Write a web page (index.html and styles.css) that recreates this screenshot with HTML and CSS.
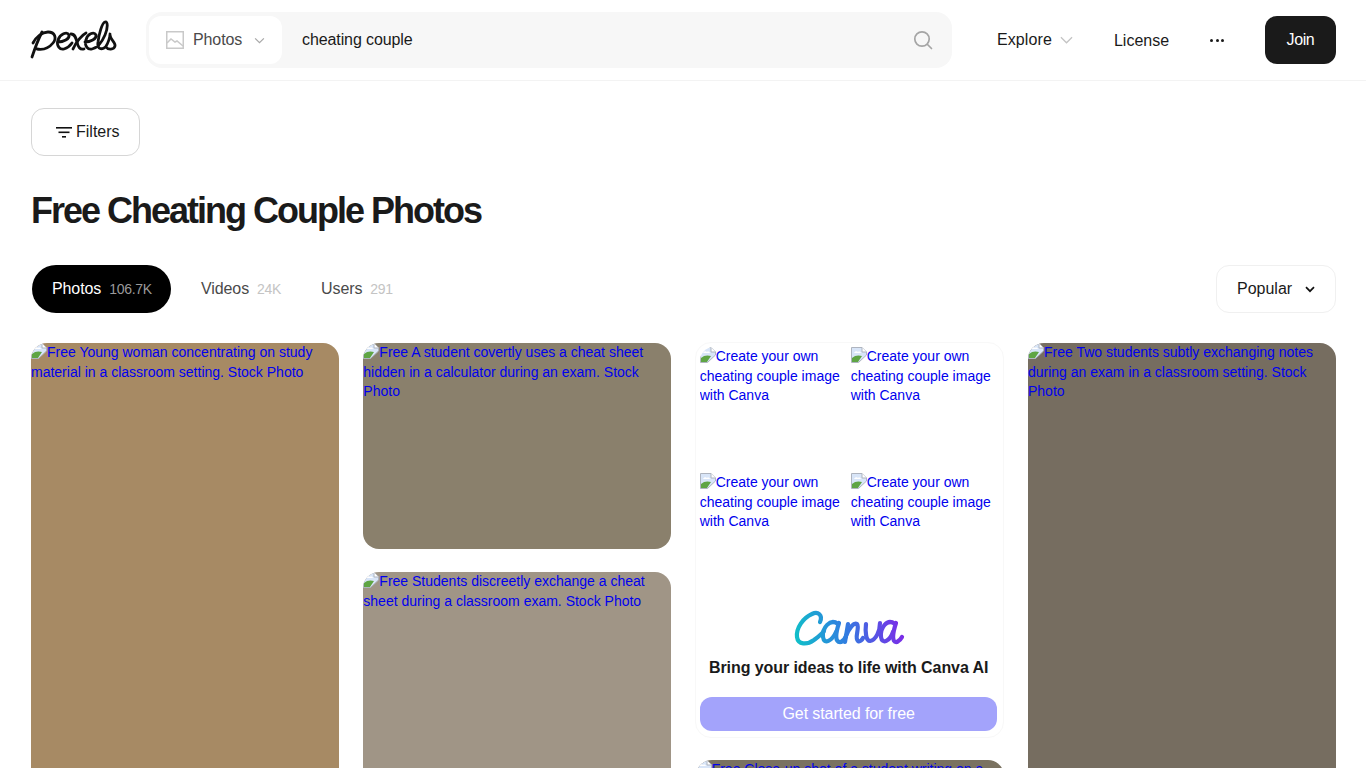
FILE: index.html
```html
<!DOCTYPE html>
<html lang="en">

<head>
	<meta charset="UTF-8">
	<meta name="viewport" content="width=device-width, initial-scale=1.0">
	<title>Free Cheating Couple Photos</title>
	<link rel="stylesheet" href="styles.css">
</head>

<body>
	<svg class="defs" width="0" height="0">
		<defs>
			<symbol id="broken" viewBox="0 0 16 16">
				<path d="M0.500 0.500h10.500l4.500 4.500v3l-8 7.500H0.500z" fill="#d8e5f8" stroke="#aeb4bf" stroke-width="1" />
				<path d="M11 0.500v4.500h4.500" fill="#fff" stroke="#aeb4bf" stroke-width="1" />
				<path d="M3 6c1-2 3-2 4-1 1-1 3 0 3 1z" fill="#fff" />
				<path d="M1 15v-4c3-3 7-3 10-2l-4 6z" fill="#5fa544" />
			</symbol>
			<linearGradient id="canva-grad" gradientUnits="userSpaceOnUse" x1="795" y1="640" x2="902" y2="620">
				<stop offset="0" stop-color="#10c0c8" />
				<stop offset="0.45" stop-color="#2f7fe0" />
				<stop offset="1" stop-color="#7d2ae8" />
			</linearGradient>
		</defs>
	</svg>

	<header class="topbar">
		<svg class="logo" viewBox="28 18 90 44" width="90" height="44" fill="none" stroke="#111" stroke-width="2.800" stroke-linecap="round" stroke-linejoin="round">
			<path d="M32 57C35 48 39 38 42 32" />
			<path d="M33 43C36 37 42 32 48 32C55 32 57 38 53 43C49 48 43 50 37 49" />
			<path d="M58 42C63 42 70 39 69 35C67 31 60 34 58 40C56 46 60 50 64 49C67 48 70 46 72 43" />
			<path d="M71 34C75 34 76 38 77 42C78 47 80 50 84 49" />
			<path d="M86 33C82 35 76 42 73 49" />
			<path d="M85 42C90 42 97 39 96 35C94 31 87 34 86 40C84 46 88 50 92 49C97 48 102 42 105 35C108 28 108 21 105 22C102 23 99 34 98 42C97 48 100 50 104 48C106 47 108 44 110 36" />
			<path d="M110 34C109 39 116 42 115 46C114 50 108 50 106 47" />
		</svg>

		<div class="search">
			<button class="search-type">
				<svg class="type-icon" viewBox="0 0 18 18" width="18" height="18" fill="none" stroke="#c9c9c9" stroke-width="1.500">
					<rect x="0.750" y="0.750" width="16.500" height="16.500" />
					<path d="M1 12l4-4 4 3 2-1 6 5" />
				</svg>
				<span>Photos</span>
				<svg class="chev" viewBox="0 0 12 8" width="11" height="7" fill="none" stroke="#a8a8a8" stroke-width="1.400"><path d="M1 1.500l5 5 5-5" /></svg>
			</button>
			<span class="search-text">cheating couple</span>
			<svg class="search-icon" viewBox="0 0 20 20" width="20" height="20" fill="none" stroke="#a5a5a5" stroke-width="1.700" stroke-linecap="round">
				<circle cx="9" cy="9" r="7.200" />
				<path d="M14.500 14.500l4 4" />
			</svg>
		</div>

		<nav class="nav">
			<span class="nav-explore">Explore
				<svg viewBox="0 0 14 8" width="13" height="8" fill="none" stroke="#c4c4c4" stroke-width="1.400"><path d="M1 1l6 6 6-6" /></svg>
			</span>
			<span class="nav-license">License</span>
			<span class="nav-dots"><i></i><i></i><i></i></span>
			<button class="join">Join</button>
		</nav>
	</header>

	<main class="page">
		<button class="filters">
			<svg viewBox="0 0 16 11" width="16" height="11" fill="#111">
				<rect x="0" y="0" width="16" height="1.600" />
				<rect x="2.500" y="4.500" width="11" height="1.600" />
				<rect x="6" y="9" width="4" height="1.600" />
			</svg>
			Filters
		</button>

		<h1>Free Cheating Couple Photos</h1>

		<div class="tabs-row">
			<div class="tabs">
				<span class="tab active">Photos <small>106.7K</small></span>
				<span class="tab">Videos <small>24K</small></span>
				<span class="tab">Users <small>291</small></span>
			</div>
			<button class="sort">Popular
				<svg viewBox="0 0 10 7" width="10" height="7" fill="none" stroke="#111" stroke-width="1.700"><path d="M1 1.200l4 4 4-4" /></svg>
			</button>
		</div>

		<div class="grid">
			<div class="col">
				<a class="photo tall tan"><svg class="bi"><use href="#broken" /></svg>Free Young woman concentrating on study material in a classroom setting. Stock Photo</a>
			</div>

			<div class="col">
				<a class="photo short olive"><svg class="bi"><use href="#broken" /></svg>Free A student covertly uses a cheat sheet hidden in a calculator during an exam. Stock Photo</a>
				<a class="photo tall stone"><svg class="bi"><use href="#broken" /></svg>Free Students discreetly exchange a cheat sheet during a classroom exam. Stock Photo</a>
			</div>

			<div class="col col-canva">
				<div class="canva">
					<div class="canva-grid">
						<a class="canva-cell"><svg class="bi"><use href="#broken" /></svg>Create your own cheating couple image with Canva</a>
						<a class="canva-cell"><svg class="bi"><use href="#broken" /></svg>Create your own cheating couple image with Canva</a>
						<a class="canva-cell"><svg class="bi"><use href="#broken" /></svg>Create your own cheating couple image with Canva</a>
						<a class="canva-cell"><svg class="bi"><use href="#broken" /></svg>Create your own cheating couple image with Canva</a>
					</div>
					<svg class="canva-logo" viewBox="793 608 112 42" width="112" height="42" fill="none" stroke="url(#canva-grad)" stroke-width="4.200" stroke-linecap="round" stroke-linejoin="round">
						<path d="M820 622C823 615 818 611 812 614C803 618 796 628 797 637C798 645 807 645 814 640C818 637 821 635 824 631" />
						<path d="M838 624C830 618 822 628 823 637C824 645 832 641 836 632" />
						<path d="M839 623C836 632 834 643 841 642C843 641 845 639 846 636" />
						<path d="M848 624L845 642" />
						<path d="M846 636C849 628 854 622 857 624C860 628 854 638 858 641C860 642 862 640 863 638" />
						<path d="M866 624C865 632 866 641 870 641C876 640 880 631 880 623" />
						<path d="M895 624C887 618 880 628 881 637C882 645 890 641 893 632" />
						<path d="M896 623C893 632 891 643 897 642C899 641 901 639 902 637" />
					</svg>
					<p class="canva-title">Bring your ideas to life with Canva AI</p>
					<button class="canva-cta">Get started for free</button>
				</div>
				<a class="photo tall umber"><svg class="bi"><use href="#broken" /></svg>Free Close-up shot of a student writing on a paper during an exam. Stock Photo</a>
			</div>

			<div class="col">
				<a class="photo tall taupe"><svg class="bi"><use href="#broken" /></svg>Free Two students subtly exchanging notes during an exam in a classroom setting. Stock Photo</a>
			</div>
		</div>
	</main>
</body>

</html>
```

FILE: styles.css
```css
* {
	box-sizing: border-box;
}

html,
body {
	height: 768px;
	overflow: hidden;
}

body {
	margin: 0;
	background: #fff;
	color: #1a1a1a;
	font-family: "Liberation Sans", Arial, sans-serif;
	font-size: 16px;
}

button {
	font: inherit;
	color: inherit;
	background: none;
	border: none;
	padding: 0;
}

.defs {
	position: absolute;
}

.topbar {
	display: flex;
	align-items: center;
	height: 81px;
	padding: 0 30px 0 28px;
	border-bottom: 1px solid #f3f3f3;
}

.logo {
	flex: none;
	margin-right: 28px;
}

.search {
	display: flex;
	align-items: center;
	width: 806px;
	height: 56px;
	padding: 0 19px 0 3px;
	border-radius: 16px;
	background: #f7f7f7;
}

.search-type {
	display: flex;
	align-items: center;
	width: 133px;
	height: 48px;
	padding-left: 17px;
	border-radius: 12px;
	background: #fff;
	color: #4a4a4a;
	letter-spacing: -0.1px;
}

.type-icon {
	margin-right: 9px;
}

.search-type .chev {
	margin-left: 12px;
}

.search-text {
	flex: 1;
	padding-left: 20px;
	letter-spacing: -0.1px;
}

.nav {
	display: flex;
	flex: 1;
	align-items: center;
	margin-left: 45px;
}

.nav-explore {
	display: flex;
	align-items: center;
	gap: 8px;
	letter-spacing: 0.1px;
}

.nav-license {
	margin-left: 41px;
	position: relative;
	top: 1px;
}

.nav-dots {
	display: flex;
	gap: 2.500px;
	margin-left: 41px;
}

.nav-dots i {
	width: 3px;
	height: 3px;
	border-radius: 50%;
	background: #1a1a1a;
}

.join {
	width: 71px;
	height: 48px;
	margin-left: auto;
	border-radius: 12px;
	background: #1a1a1a;
	color: #fff;
	letter-spacing: -0.4px;
}

.page {
	padding: 27px 30px 0 31px;
}

.filters {
	display: flex;
	align-items: center;
	gap: 4px;
	width: 109px;
	height: 48px;
	padding-left: 24px;
	border: 1px solid #d6d6d6;
	border-radius: 13px;
}

h1 {
	margin: 33px 0 0;
	font-size: 36px;
	line-height: 44px;
	font-weight: 700;
	letter-spacing: -2px;
}

.tabs-row {
	display: flex;
	justify-content: space-between;
	align-items: center;
	margin-top: 32px;
}

.tabs {
	display: flex;
	align-items: center;
}

.tab {
	display: flex;
	align-items: center;
	gap: 8px;
	height: 48px;
	padding: 0 20px;
	color: #4a4a4a;
	letter-spacing: -0.1px;
}

.tab small {
	font-size: 14px;
	color: #c4c4c4;
	letter-spacing: -0.3px;
}

.tab.active {
	width: 139px;
	margin: 0 10px 0 1px;
	border-radius: 24px;
	background: #000;
	color: #fff;
}

.tab.active small {
	color: #9a9a9a;
}

.sort {
	display: flex;
	align-items: center;
	gap: 13px;
	width: 120px;
	height: 48px;
	padding-left: 20px;
	border: 1px solid #f0f0f0;
	border-radius: 13px;
}

.grid {
	display: grid;
	grid-template-columns: repeat(4, 308px);
	justify-content: space-between;
	margin-top: 30px;
}

.col {
	display: flex;
	flex-direction: column;
	gap: 23px;
}

.photo {
	display: block;
	border-radius: 16px;
	color: #00e;
	font-size: 14px;
	line-height: 19.600px;
	overflow: hidden;
}

.bi {
	width: 16px;
	height: 16px;
	vertical-align: -2px;
}

.short {
	height: 206px;
}

.tall {
	height: 460px;
}

.tan {
	background: #a78a64;
}

.olive {
	background: #8a806c;
}

.stone {
	background: #a09586;
}

.umber {
	background: #7a7260;
}

.taupe {
	background: #766d60;
}

.col-canva {
	gap: 22px;
}

.canva {
	display: flex;
	flex-direction: column;
	align-items: center;
	height: 396px;
	margin: -1px 0 0 -1px;
	padding: 4px 5px 0 4px;
	border: 1px solid #f8f8f8;
	border-radius: 16px;
}

.canva-grid {
	display: grid;
	grid-template-columns: 147px 147px;
	grid-auto-rows: 126px;
	column-gap: 4px;
	align-self: flex-start;
}

.canva-cell {
	color: #00e;
	font-size: 14px;
	line-height: 19.600px;
}

.canva-cell:first-child {
	border-top-left-radius: 14px;
	overflow: hidden;
}

.canva-logo {
	margin-top: 9px;
}

.canva-title {
	margin: 7px 0 0;
	font-size: 16px;
	line-height: 22px;
	font-weight: 700;
	color: #1a1a1a;
	letter-spacing: -0.07px;
	white-space: nowrap;
}

.canva-cta {
	width: 297px;
	height: 34px;
	margin-top: 18px;
	border-radius: 12px;
	background: #a3a3fb;
	color: #fff;
	letter-spacing: -0.1px;
}
```
